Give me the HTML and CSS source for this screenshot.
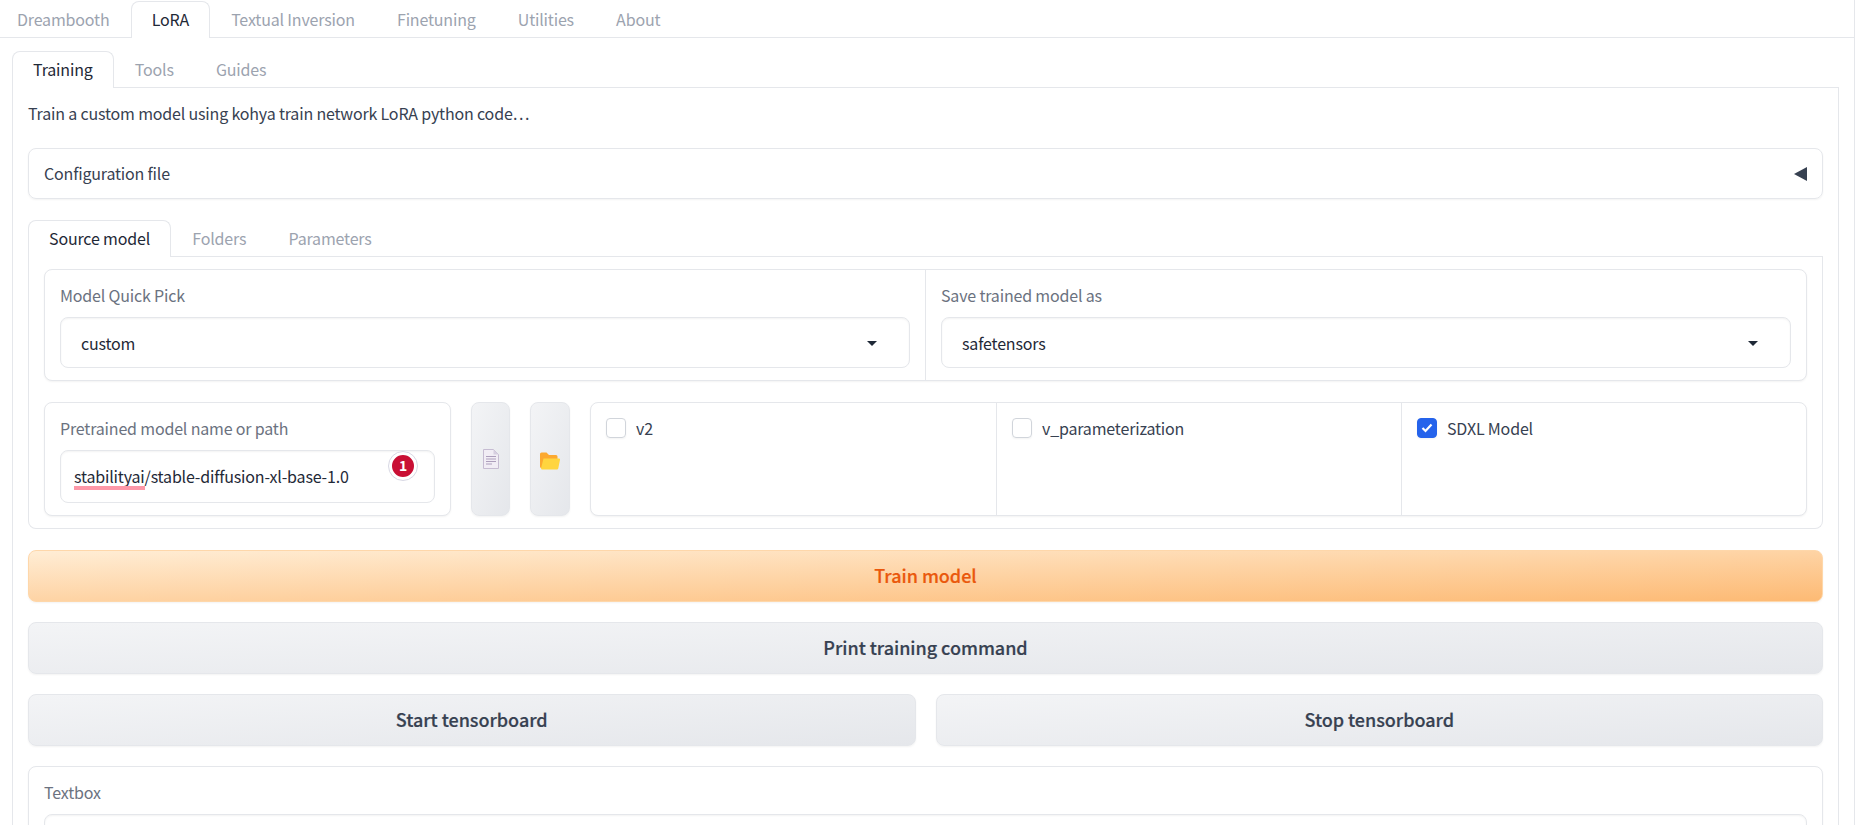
FILE: index.html
```html
<!DOCTYPE html>
<html lang="en">
<head>
    <meta charset="UTF-8">
    <title>LoRA Training</title>
    <link rel="stylesheet" href="styles.css">
</head>

<body>
<div class="app">
    <div class="tab-nav top-nav">
        <div class="tab">Dreambooth</div>
        <div class="tab selected">LoRA</div>
        <div class="tab">Textual Inversion</div>
        <div class="tab">Finetuning</div>
        <div class="tab">Utilities</div>
        <div class="tab">About</div>
    </div>
    <div class="top-panel">
        <div class="tab-nav">
            <div class="tab selected">Training</div>
            <div class="tab">Tools</div>
            <div class="tab">Guides</div>
        </div>
        <div class="panel main-panel">
            <p class="intro">Train a custom model using kohya train network LoRA python code…</p>

            <div class="accordion">
                <span>Configuration file</span>
                <i class="accordion-arrow"></i>
            </div>

            <div class="sub-tabs">
                <div class="tab-nav">
                    <div class="tab selected">Source model</div>
                    <div class="tab">Folders</div>
                    <div class="tab">Parameters</div>
                </div>
                <div class="panel source-panel">
                    <div class="box split">
                        <div class="field">
                            <label>Model Quick Pick</label>
                            <div class="input select">
                                <span>custom</span>
                                <svg class="caret" width="10" height="5" viewBox="0 0 10 5"><path d="M0 0h10L5 5z"/></svg>
                            </div>
                        </div>
                        <div class="field">
                            <label>Save trained model as</label>
                            <div class="input select">
                                <span>safetensors</span>
                                <svg class="caret" width="10" height="5" viewBox="0 0 10 5"><path d="M0 0h10L5 5z"/></svg>
                            </div>
                        </div>
                    </div>

                    <div class="model-row">
                        <div class="box field path-field">
                            <label>Pretrained model name or path</label>
                            <div class="input path-input">
                                <span><span class="misspelled">stabilityai</span>/stable-diffusion-xl-base-1.0</span>
                                <b class="badge">1</b>
                            </div>
                        </div>
                        <div class="btn icon-btn">
                            <svg width="16" height="20" viewBox="0 0 16 20">
                                <path d="M.5.5h10l5 5v14H.5z" fill="#f1edf5" stroke="#c6bcd2"/>
                                <path d="M10.500.5v5h5z" fill="#d6cfe0"/>
                                <path d="M3 7.500h10M3 10h10M3 12.500h10M3 15h6" stroke="#ad9fbc" fill="none"/>
                            </svg>
                        </div>
                        <div class="btn icon-btn folder-btn">
                            <svg width="20" height="18" viewBox="0 0 20 18">
                                <path d="M0 2a1.500 1.500 0 0 1 1.500-1.500h5L9 3h7a1.500 1.500 0 0 1 1.500 1.500V16H1.500A1.500 1.500 0 0 1 0 14.500z" fill="#fca930"/>
                                <path d="M3.500 6.500H19a1 1 0 0 1 1 1.200l-1.700 8.500a1.500 1.500 0 0 1-1.500 1.300H2a1.500 1.500 0 0 1-1-1z" fill="#ffd53f"/>
                            </svg>
                        </div>
                        <div class="box checks">
                            <div class="check"><i class="checkbox"></i><span>v2</span></div>
                            <div class="check"><i class="checkbox"></i><span>v_parameterization</span></div>
                            <div class="check">
                                <i class="checkbox checked">
                                    <svg width="12" height="10" viewBox="0 0 12 10"><path d="M1.500 5l3 3 6-6.500" fill="none" stroke="#fff" stroke-width="2.200"/></svg>
                                </i>
                                <span>SDXL Model</span>
                            </div>
                        </div>
                    </div>
                </div>
            </div>

            <div class="btn wide primary">Train model</div>
            <div class="btn wide">Print training command</div>
            <div class="btn-row">
                <div class="btn wide">Start tensorboard</div>
                <div class="btn wide">Stop tensorboard</div>
            </div>

            <div class="box field textbox">
                <label>Textbox</label>
                <div class="input"></div>
            </div>
        </div>
    </div>
</div>
</body>

</html>
```

FILE: styles.css
```css
html,body{
    margin: 0;
    height: 825px;
    overflow: hidden;
    background: #fff;
}
body{
    font-family: "Noto Sans CJK SC", "Source Sans Pro", "Liberation Sans", sans-serif;
    font-size: 16px;
    line-height: 22px;
    letter-spacing: -0.175px;
    color: #374151;
}
.app{
    width: 1855px;
    border-right: 1px solid #e5e7eb;
    box-sizing: border-box;
    height: 825px;
    margin-right: 7px;
}
.tab-nav{
    display: flex;
    height: 36px;
    border-bottom: 1px solid #e5e7eb;
    color: #9ca3af;
}
.top-nav{
    padding-top: 1px;
}
.top-nav .tab:first-child{
    padding-left: 16px;
}
.tab{
    padding: 0 20.1px;
    border: 1px solid transparent;
    border-bottom: 0;
    border-radius: 8px 8px 0 0;
    line-height: 34px;
    height: 36px;
    box-sizing: border-box;
    background: transparent;
}
.tab.selected{
    color: #1f2937;
    background: #fff;
    border-color: #e5e7eb;
    height: 37px;
}
.top-panel{
    width: 1827px;
    margin-left: 12px;
    padding-top: 13px;
}
.panel{
    border: 1px solid #e5e7eb;
    border-top: 0;
}
.main-panel{
    padding: 0 15px;
    height: 800px;
}
.intro{
    margin: 0;
    padding-top: 14px;
    height: 46px;
    color: #374151;
}
.accordion{
    display: flex;
    justify-content: space-between;
    align-items: center;
    height: 51px;
    padding: 0 15px;
    box-sizing: border-box;
    border: 1px solid #e5e7eb;
    border-radius: 8px;
    box-shadow: 0 1px 2px rgba(0,0,0,0.05);
}
.accordion span{
    margin-top: -2px;
}
.accordion-arrow{
    width: 0;
    height: 0;
    border-style: solid;
    border-width: 7px 13px 7px 0;
    border-color: transparent #374151 transparent transparent;
}
.sub-tabs{
    margin-top: 21px;
}
.source-panel{
    padding: 12px 15px;
    border-radius: 0 0 8px 8px;
}
.box{
    border: 1px solid #e5e7eb;
    border-radius: 8px;
    box-shadow: 0 1px 2px rgba(0,0,0,0.05);
    background: #fff;
}
.split{
    display: grid;
    grid-template-columns: calc(50% - 0.5px) 1fr;
}
.split .field+.field{
    border-left: 1px solid #e5e7eb;
}
.field{
    padding: 14px 15px 12px;
    box-sizing: border-box;
}
.field label{
    display: block;
    color: #6b7280;
    margin-bottom: 11px;
}
.input{
    position: relative;
    height: 51px;
    padding: 0 20px;
    box-sizing: border-box;
    display: flex;
    align-items: center;
    justify-content: space-between;
    border: 1px solid #e5e7eb;
    border-radius: 8px;
    box-shadow: inset 0 1px 2px rgba(0,0,0,0.05);
    color: #1f2937;
}
.caret{
    fill: #1f2937;
    margin-right: 12px;
    margin-top: 2px;
}
.model-row{
    display: flex;
    gap: 20px;
    margin-top: 21px;
    height: 114px;
}
.path-field{
    width: 407px;
    flex: none;
}
.path-input{
    height: 53px;
    padding: 0 13px 2px;
    justify-content: flex-start;
}
.misspelled{
    position: relative;
}
.misspelled:after{
    content: "";
    position: absolute;
    left: 0;
    right: 0;
    bottom: -2px;
    height: 4px;
    background: #fd98a8;
}
.badge{
    position: absolute;
    left: 327px;
    top: 0;
    width: 30px;
    height: 30px;
    box-sizing: border-box;
    border: 4px solid #fff;
    outline: 1px solid #d8d8e4;
    outline-offset: -1px;
    border-radius: 50%;
    background: #c90f34;
    color: #fff;
    font-size: 14px;
    font-weight: 700;
    line-height: 21px;
    text-align: center;
}
.btn{
    display: flex;
    align-items: center;
    justify-content: center;
    border-radius: 8px;
    border: 1px solid #e5e7eb;
    box-sizing: border-box;
    background: linear-gradient(to bottom right, #f3f4f6, #e5e7eb);
    box-shadow: 0 1px 2px rgba(0,0,0,0.05);
    font-weight: 500;
    letter-spacing: -0.03px;
    -webkit-text-stroke: 0.2px currentColor;
}
.icon-btn{
    width: 39px;
    flex: none;
}
.folder-btn{
    width: 40px;
}
.folder-btn svg{
    margin-top: 3px;
}
.checks{
    flex: 1;
    display: grid;
    grid-template-columns: repeat(3, 1fr);
}
.check{
    display: flex;
    gap: 10px;
    padding: 15px;
    align-items: flex-start;
    color: #374151;
}
.check+.check{
    border-left: 1px solid #e5e7eb;
}
.checkbox{
    width: 20px;
    height: 20px;
    box-sizing: border-box;
    border: 1px solid #d1d5db;
    border-radius: 4px;
    box-shadow: 0 1px 2px rgba(0,0,0,0.05);
    display: flex;
    align-items: center;
    justify-content: center;
    flex: none;
}
.checkbox.checked{
    background: #2563eb;
    border-color: #2563eb;
}
.check span{
    margin-top: -1px;
}
.wide{
    height: 52px;
    margin-top: 20px;
    font-size: 18px;
    padding-bottom: 2px;
}
.primary{
    margin-top: 21px;
    background: linear-gradient(to bottom right, #ffedd5, #fdba74);
    border-color: #fed7aa;
    color: #ea580c;
}
.btn-row{
    display: grid;
    grid-template-columns: 1fr 1fr;
    gap: 20px;
}
.textbox{
    margin-top: 20px;
}
.textbox .input{
    height: 80px;
}
```
